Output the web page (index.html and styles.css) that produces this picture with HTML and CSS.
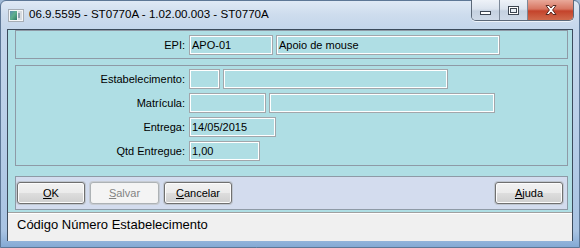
FILE: index.html
```html
<!DOCTYPE html>
<html lang="pt">
<head>
<meta charset="utf-8">
<title>ST0770A</title>
<link rel="stylesheet" href="styles.css">
</head>
<body>
<div class="window">
  <div class="titlebar">
    <svg class="app-icon" width="16" height="13" viewBox="0 0 16 13">
      <defs>
        <linearGradient id="ig" x1="0" y1="0" x2="1" y2="1">
          <stop offset="0" stop-color="#5a8fb0"/>
          <stop offset="0.5" stop-color="#5fae8c"/>
          <stop offset="1" stop-color="#2f7a6a"/>
        </linearGradient>
      </defs>
      <rect x="0.5" y="0.5" width="15" height="12" fill="#f4f6f8" stroke="#a6adb5"/>
      <rect x="2" y="2" width="7" height="9" fill="url(#ig)"/>
      <rect x="10" y="2" width="4" height="9" fill="#d6dbe0"/>
      <rect x="10" y="4" width="2" height="5" fill="#8fa0ae"/>
    </svg>
    <span class="title">06.9.5595 - ST0770A - 1.02.00.003 - ST0770A</span>
    <div class="controls">
      <div class="ctl ctl-min"><span class="glyph-min"></span></div>
      <div class="ctl ctl-max"><span class="glyph-max"></span></div>
      <div class="ctl ctl-close">
        <svg width="14" height="12" viewBox="0 0 14 12">
          <path d="M2 1.5 L5 1.5 L7 4 L9 1.5 L12 1.5 L8.6 6 L12 10.5 L9 10.5 L7 8 L5 10.5 L2 10.5 L5.4 6 Z" fill="#fff" stroke="#5a2a22" stroke-width="1" stroke-linejoin="round"/>
        </svg>
      </div>
    </div>
  </div>
  <div class="client">
    <div class="panel panel-top">
      <div class="row">
        <label class="lbl">EPI:</label>
        <div class="field w84">APO-01</div>
        <div class="field w223">Apoio de mouse</div>
      </div>
    </div>
    <div class="panel panel-main">
      <div class="row">
        <label class="lbl">Estabelecimento:</label>
        <div class="field w30"></div>
        <div class="field w224"></div>
      </div>
      <div class="row">
        <label class="lbl">Matrícula:</label>
        <div class="field w76"></div>
        <div class="field w225"></div>
      </div>
      <div class="row">
        <label class="lbl">Entrega:</label>
        <div class="field w86">14/05/2015</div>
      </div>
      <div class="row">
        <label class="lbl">Qtd Entregue:</label>
        <div class="field w70">1,00</div>
      </div>
    </div>
    <div class="buttonbar">
      <button class="btn"><u>O</u>K</button>
      <button class="btn disabled"><u>S</u>alvar</button>
      <button class="btn"><u>C</u>ancelar</button>
      <span class="spacer"></span>
      <button class="btn"><u>A</u>juda</button>
    </div>
    <div class="statusbar">Código Número Estabelecimento</div>
  </div>
</div>
</body>
</html>
```

FILE: styles.css
```css
html, body {
  margin: 0;
  padding: 0;
  width: 580px;
  height: 248px;
  overflow: hidden;
  background: #9fb9d6;
}

.window {
  box-sizing: border-box;
  width: 580px;
  height: 248px;
  display: flex;
  flex-direction: column;
  border: 1px solid #5d7796;
  border-radius: 6px 6px 0 0;
  background: linear-gradient(to bottom, #dfe9f5 0px, #cddced 14px, #c4d6eb 28px, #b9cfe8 120px, #a8c3e2 230px, #7fa6d3 248px);
  font-family: "Liberation Sans", Arial, sans-serif;
}

.titlebar {
  height: 28px;
  display: flex;
  align-items: flex-start;
  position: relative;
}

.app-icon {
  margin: 8px 0 0 7px;
}

.title {
  margin: 6px 0 0 5px;
  font-family: "Liberation Sans", Arial, sans-serif;
  font-size: 11.6px;
  color: #000;
  letter-spacing: 0;
}

.controls {
  position: absolute;
  top: -1px;
  left: 470px;
  display: flex;
  height: 20px;
  border: 1px solid #5b6878;
  border-top: none;
  border-radius: 0 0 5px 5px;
  overflow: hidden;
  box-shadow: 0 1px 0 rgba(255,255,255,0.7);
}

.ctl {
  height: 20px;
  display: flex;
  align-items: center;
  justify-content: center;
}

.ctl-min, .ctl-max {
  width: 27px;
  background: linear-gradient(to bottom, #eef2f8 0%, #dbe3ee 45%, #c5d1e0 55%, #cfdae8 100%);
  border-right: 1px solid #7c8898;
}

.ctl-max {
  width: 27px;
}

.ctl-close {
  width: 45px;
  background: linear-gradient(to bottom, #e9a99a 0%, #d77561 45%, #c4432b 55%, #d06a4c 100%);
}

.glyph-min {
  display: block;
  width: 9px;
  height: 2px;
  margin-top: 6px;
  background: #fff;
  border: 1px solid #3d4652;
}

.glyph-max {
  display: block;
  width: 7px;
  height: 5px;
  border: 1px solid #3d4652;
  border-top-width: 3px;
  background: #fff;
  box-shadow: inset 0 0 0 1px #3d4652, 0 0 0 1px #fff;
  box-sizing: content-box;
}

.glyph-max {
  width: 5px;
  height: 3px;
  border: 1px solid #3d4652;
  background: #e8eef5;
  box-shadow: 0 0 0 1px #fff, 0 0 0 2px #3d4652;
}

.client {
  flex: 1;
  margin: 0 6px 6px 6px;
  border: 1px solid #3c4b5c;
  border-bottom: none;
  background: #afdee4;
  display: flex;
  flex-direction: column;
  min-height: 0;
}

.panel {
  margin: 0 4px 0 7px;
  border: 1px solid #8e9aa6;
}

.panel-top {
  padding: 4px 0 3px 0;
}

.panel-main {
  margin-top: 6px;
  padding: 3px 0 4px 0;
  display: flex;
  flex-direction: column;
  gap: 4px;
}

.row {
  display: flex;
  align-items: center;
  height: 20px;
}

.lbl {
  width: 169px;
  text-align: right;
  font-size: 11px;
  color: #000;
  margin-right: 4px;
}

.field {
  box-sizing: border-box;
  height: 20px;
  border: 1px solid #a2a6ab;
  box-shadow: inset 0 0 0 1px #ffffff;
  background: #afdee4;
  font-size: 11px;
  line-height: 18px;
  padding-left: 2px;
  margin-right: 3px;
  color: #000;
  white-space: nowrap;
  overflow: hidden;
}

.w30 { width: 31px; }
.w70 { width: 71px; }
.w76 { width: 77px; }
.w84 { width: 84px; }
.w86 { width: 87px; }
.w223 { width: 224px; }
.w224 { width: 225px; }
.w225 { width: 226px; }

.buttonbar {
  margin: 10px 4px 0 7px;
  height: 32px;
  border: 1px solid #8e9aa6;
  background: #d3dcee;
  display: flex;
  align-items: center;
  gap: 4px;
  padding: 0 4px 0 0;
}

.spacer {
  flex: 1;
}

.btn {
  box-sizing: border-box;
  width: 68px;
  height: 22px;
  margin: 0;
  padding: 0;
  border: 1px solid #707070;
  border-radius: 3px;
  background: linear-gradient(to bottom, #f2f2f2 0%, #ebebeb 48%, #dddddd 52%, #cfcfcf 100%);
  box-shadow: inset 0 0 0 1px #fcfcfc, 0 0 0 1px #bfc6cf;
  font-family: "Liberation Sans", Arial, sans-serif;
  font-size: 11px;
  color: #000;
}

.btn:first-child {
  margin-left: 1px;
}

.btn.disabled {
  border-color: #adb2b5;
  background: #f4f4f4;
  color: #838383;
  box-shadow: 0 0 0 1px #c7ccd3;
  width: 69px;
}

.btn + .btn {
  margin-left: 1px;
}

.statusbar {
  margin-top: 2px;
  flex: 1;
  border-top: 1px solid #a0a0a0;
  box-shadow: inset 0 1px 0 #ffffff;
  background: #f0f0f0;
  font-family: "Liberation Sans", Arial, sans-serif;
  font-size: 13px;
  color: #000;
  padding: 4px 0 0 9px;
}
```
